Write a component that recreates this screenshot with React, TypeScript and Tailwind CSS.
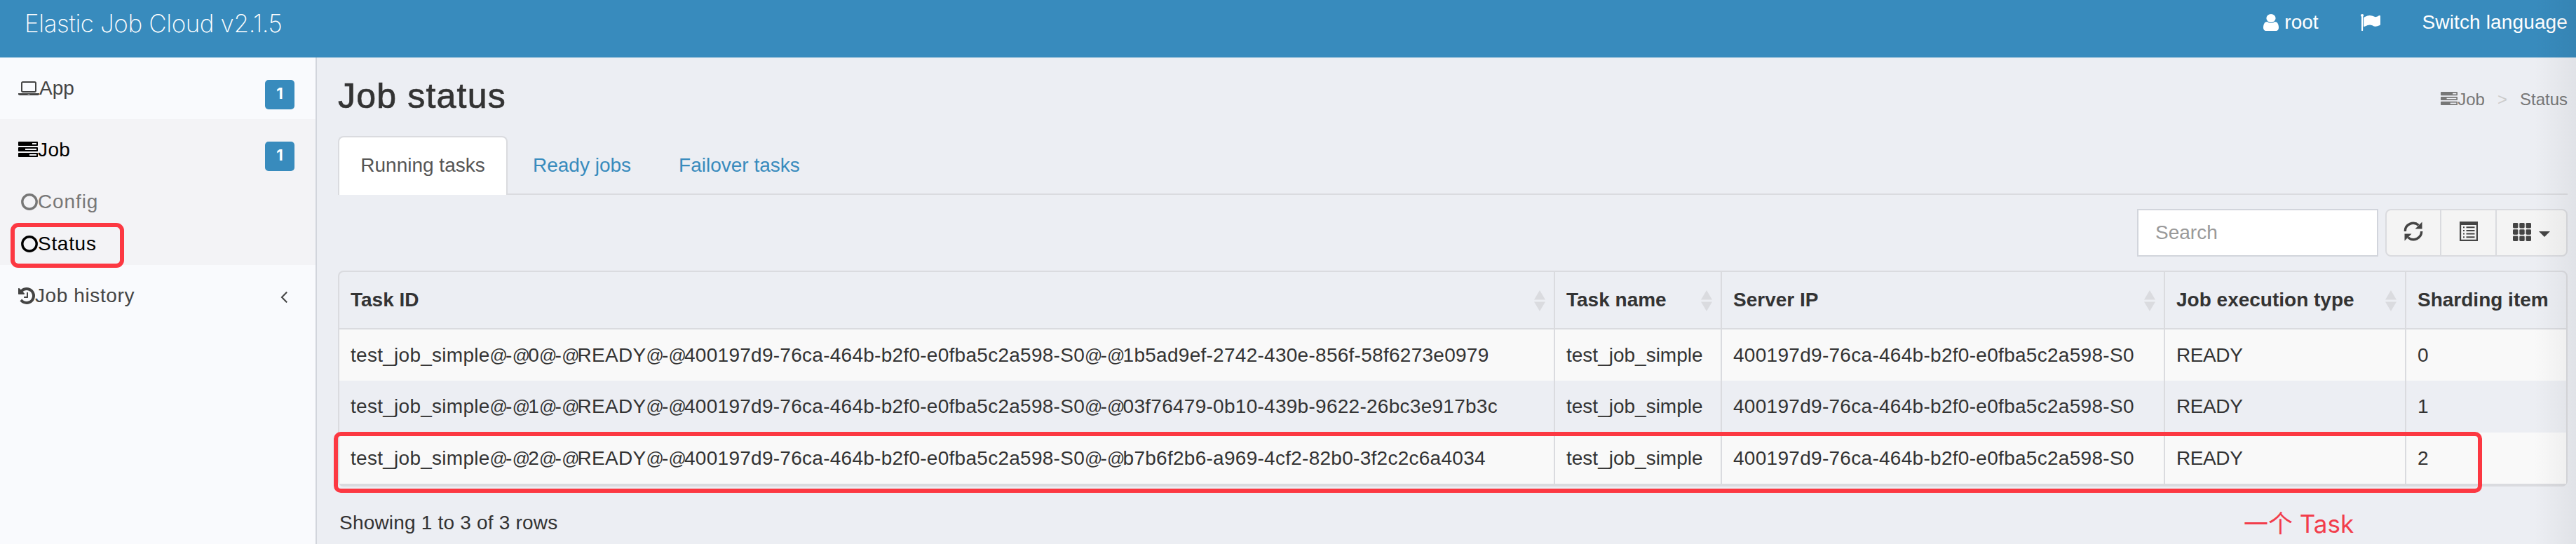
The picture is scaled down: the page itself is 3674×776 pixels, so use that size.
import type { ReactNode } from "react";

const TASKS =
  "M1024 1408h640v-128h-640v128zm-384-512h1024v-128h-1024v128zm640-512h384v-128h-384v128zm512 832v256q0 26-19 45t-45 19h-1664q-26 0-45-19t-19-45v-256q0-26 19-45t45-19h1664q26 0 45 19t19 45zm0-512v256q0 26-19 45t-45 19h-1664q-26 0-45-19t-19-45v-256q0-26 19-45t45-19h1664q26 0 45 19t19 45zm0-512v256q0 26-19 45t-45 19h-1664q-26 0-45-19t-19-45v-256q0-26 19-45t45-19h1664q26 0 45 19t19 45z";
const LAPTOP =
  "M416 1280q-66 0-113-47t-47-113v-704q0-66 47-113t113-47h1088q66 0 113 47t47 113v704q0 66-47 113t-113 47h-1088zm-32-864v704q0 13 9.5 22.5t22.5 9.5h1088q13 0 22.5-9.5t9.5-22.5v-704q0-13-9.5-22.5t-22.5-9.5h-1088q-13 0-22.5 9.5t-9.5 22.5zm1376 928h160v96q0 40-47 68t-113 28h-1600q-66 0-113-28t-47-68v-96h1760zm-720 96q16 0 16-16t-16-16h-160q-16 0-16 16t16 16h160z";
const HISTORY =
  "M1664 896q0 156-61 298t-164 245-245 164-298 61q-172 0-327-72.5t-264-204.5q-7-10-6.5-22.5t8.5-20.5l137-138q10-9 25-9 16 2 23 12 73 95 179 147t225 52q104 0 198.5-40.5t163.5-109.5 109.5-163.5 40.5-198.5-40.5-198.5-109.5-163.5-163.5-109.5-198.5-40.5q-98 0-188 35.5t-160 101.5l137 138q31 30 14 69-17 40-59 40h-448q-26 0-45-19t-19-45v-448q0-42 40-59 39-17 69 14l130 129q107-101 244.5-156.5t284.5-55.5q156 0 298 61t245 164 164 245 61 298zm-640-288v448q0 14-9 23t-23 9h-320q-14 0-23-9t-9-23v-64q0-14 9-23t23-9h224v-352q0-14 9-23t23-9h64q14 0 23 9t9 23z";
const USER =
  "M1536 1399q0 109-62.5 187t-150.5 78h-854q-88 0-150.5-78t-62.5-187q0-85 8.5-160.5t31.5-152 58.5-131 94-89 134.5-34.5q131 128 313 128t313-128q76 0 134.5 34.5t94 89 58.5 131 31.5 152 8.5 160.5zm-256-887q0 159-112.5 271.5t-271.5 112.5-271.5-112.5-112.5-271.5 112.5-271.5 271.5-112.5 271.5 112.5 112.5 271.5z";
const FLAG =
  "M320 256q0 72-64 110v1266q0 13-9.5 22.5t-22.5 9.5h-64q-13 0-22.5-9.5t-9.5-22.5v-1266q-64-38-64-110 0-53 37.5-90.5t90.5-37.5 90.5 37.5 37.5 90.5zm1472 64v763q0 25-12.5 38.5t-39.5 27.5q-215 116-369 116-61 0-123.5-22t-108.5-48-115.5-48-142.5-22q-192 0-464 146-17 9-33 9-26 0-45-19t-19-45v-742q0-32 31-55 21-14 79-43 236-120 421-120 107 0 200 29t219 88q38 19 88 19 54 0 117.5-21t110-47 88-47 54.5-21q26 0 45 19t19 45z";
const ANGLE =
  "M1203 544q0 13-10 23l-393 393 393 393q10 10 10 23t-10 23l-50 50q-10 10-23 10t-23-10l-466-466q-10-10-10-23t10-23l466-466q10-10 23-10t23 10l50 50q10 10 10 23z";

function Icon({ d, box, className }: { d: string; box: string; className: string }) {
  return (
    <svg viewBox={box} className={`shrink-0 fill-current ${className}`} preserveAspectRatio="none">
      <path d={d} />
    </svg>
  );
}

function Ring() {
  return (
    <svg viewBox="0 0 24 24" className="h-6 w-6 shrink-0">
      <circle cx="12" cy="12" r="10.2" fill="none" stroke="currentColor" strokeWidth="3.4" />
    </svg>
  );
}

function Badge() {
  return (
    <span className="mt-2 flex h-[42px] w-[42px] items-center justify-center rounded-[5px] bg-[#388bbd] pb-1 font-['Inter','Liberation_Sans',sans-serif] text-[22px] font-bold text-white">
      1
    </span>
  );
}

function SortArrows() {
  return (
    <svg viewBox="0 0 16 30" className="mt-0.5 h-[30px] w-4 shrink-0 fill-[#dadbdf]">
      <path d="M8 0L16 13.500H0zM8 30L16 16.500H0z" />
    </svg>
  );
}

function Th({ children, className, sort = true }: { children: ReactNode; className: string; sort?: boolean }) {
  return (
    <div className={`flex items-center justify-between border-[#dadbdf] pl-4 ${className}`}>
      <span>{children}</span>
      {sort && <SortArrows />}
    </div>
  );
}

function TaskId({ value }: { value: string }) {
  return (
    <span className="tracking-[0.27px]">
      {value.split(/(@)/).map((part, i) =>
        part === "@" ? (
          <span key={i} className="text-[25px] tracking-[-2.9px]">@</span>
        ) : (
          part
        ),
      )}
    </span>
  );
}

const SERVER = "400197d9-76ca-464b-b2f0-e0fba5c2a598-S0";
const ROWS = [
  "1b5ad9ef-2742-430e-856f-58f6273e0979",
  "03f76479-0b10-439b-9622-26bc3e917b3c",
  "b7b6f2b6-a969-4cf2-82b0-3f2c2c6a4034",
];

export default function App() {
  return (
    <div className="relative flex h-[776px] w-[3674px] flex-col overflow-hidden bg-[#eceef3] font-['Liberation_Sans',sans-serif] text-[28px] leading-10 text-[#333]">
      <header className="flex h-[82px] shrink-0 justify-between bg-[#388bbd] text-white">
        <div className="pt-[13px] pl-[35px] font-['Inter','Liberation_Sans',sans-serif] text-[35px] font-extralight tracking-[-0.4px]">
          Elastic Job Cloud v2.1.5
        </div>
        <div className="flex pt-3 pr-3">
          <div className="flex">
            <Icon d={USER} box="256 128 1280 1536" className="mt-2 h-6 w-[22px]" />
            <span className="ml-2">root</span>
          </div>
          <Icon d={FLAG} box="64 128 1728 1536" className="mt-2 ml-[60px] h-6 w-7" />
          <span className="ml-[60px] tracking-[0.13px]">Switch language</span>
        </div>
      </header>

      <div className="flex flex-1">
        <aside className="flex w-[452px] shrink-0 flex-col border-r-2 border-[#d2d5dc] bg-[#f9fafd] text-[#444]">
          <div className="flex h-[88px] justify-between pt-6 pr-[30px] pl-[26px]">
            <div className="flex">
              <Icon d={LAPTOP} box="0 256 1920 1280" className="mt-2.5 h-5 w-[30px]" />
              <span>App</span>
            </div>
            <Badge />
          </div>
          <div className="h-[208px] bg-[#f3f3f6] text-black">
            <div className="flex h-[88px] justify-between pt-6 pr-[30px] pl-[26px]">
              <div className="flex">
                <Icon d={TASKS} box="0 128 1792 1408" className="mt-2 h-[22px] w-7" />
                <span className="tracking-[0.4px]">Job</span>
              </div>
              <Badge />
            </div>
            <div className="flex h-[60px] items-center pl-[30px] text-[#777]">
              <Ring />
              <span className="tracking-[0.9px]">Config</span>
            </div>
            <div className="flex h-[60px] items-center pl-[30px]">
              <Ring />
              <span className="tracking-[0.7px]">Status</span>
            </div>
          </div>
          <div className="flex h-[88px] justify-between pt-6 pr-10 pl-[26px]">
            <div className="flex">
              <Icon d={HISTORY} box="128 128 1536 1536" className="mt-2 h-6 w-6" />
              <span className="tracking-[0.6px]">Job history</span>
            </div>
            <Icon d={ANGLE} box="581 460 640 1000" className="mt-3.5 h-4 w-2.5" />
          </div>
        </aside>

        <main className="flex flex-1 flex-col pr-3 pl-[30px]">
          <div className="flex h-[112px] justify-between">
            <h1 className="pt-[31px] text-[50px] leading-[48px] font-medium tracking-[1.2px] [-webkit-text-stroke:0.7px_#333]">Job status</h1>
            <div className="flex pt-10 text-[24px] text-[#777]">
              <Icon d={TASKS} box="0 128 1792 1408" className="mt-[9px] h-[19px] w-6" />
              <span>Job</span>
              <span className="mx-[18px] text-[#ccc]">&gt;</span>
              <span>Status</span>
            </div>
          </div>

          <div className="flex h-[84px] shrink-0 border-b-2 border-[#dadbdf]">
            <div className="-mb-0.5 flex w-[242px] items-center justify-center rounded-t-lg border-2 border-b-0 border-[#dadbdf] bg-white pb-0.5 text-[#555]">
              Running tasks
            </div>
            <div className="flex items-center pt-0.5 pl-9 text-[#388bbd]">Ready jobs</div>
            <div className="flex items-center pt-0.5 pl-[68px] text-[#388bbd]">Failover tasks</div>
          </div>

          <div className="mt-5 flex h-[68px] shrink-0 justify-end">
            <div className="flex w-[344px] items-center border-2 border-[#d2d5dc] bg-white pl-6 text-[#999]">Search</div>
            <div className="ml-2.5 flex w-[260px] rounded-lg border-2 border-[#dadbdf] bg-[#f4f4f4] text-[#444]">
              <div className="flex w-[76px] items-center justify-center pb-1">
                <svg viewBox="0 0 28 28" className="h-7 w-7">
                  <path d="M2.300 14A11.600 11.600 0 0 1 21.500 5.200M25.700 14A11.600 11.600 0 0 1 6.500 22.800" fill="none" stroke="currentColor" strokeWidth="3.400" />
                  <path d="M26.500 0.500V10.500H16.500zM1.500 27.500V17.500H11.500z" fill="currentColor" />
                </svg>
              </div>
              <div className="flex w-[79px] items-center justify-center border-l-2 border-[#dadbdf] pb-1">
                <svg viewBox="0 0 26 28" className="h-7 w-[26px]">
                  <path fillRule="evenodd" d="M0 0H26V28H0zM2.200 5V25.800H23.800V5z" fill="currentColor" />
                  <path d="M5 7.200h2v2H5zM9.500 7.200h12v2h-12zM5 12h2v2H5zM9.500 12h12v2h-12zM5 16.600h2v2H5zM9.500 16.600h12v2h-12zM5 21.300h2v2H5zM9.500 21.300h12v2h-12z" fill="currentColor" />
                </svg>
              </div>
              <div className="flex flex-1 items-center gap-[11px] border-l-2 border-[#dadbdf] pb-0.5 pl-[23px]">
                <svg viewBox="0 0 26 26" className="h-[26px] w-[26px] fill-current">
                  {[0, 9.3, 18.6].map((y) => [0, 9.3, 18.6].map((x) => <rect key={`${x}-${y}`} x={x} y={y} width="7.400" height="7.400" rx="1.400" />))}
                </svg>
                <svg viewBox="0 0 16 8" className="mt-1.5 h-2 w-4 fill-current">
                  <path d="M0 0H16L8 8z" />
                </svg>
              </div>
            </div>
          </div>

          <div className="mt-5 flex h-[308px] shrink-0 flex-col rounded-lg border-2 border-b-4 border-[#dadbdf]">
            <div className="flex h-[82px] shrink-0 border-b-2 border-[#dadbdf] font-bold">
              <Th className="w-[1732px] pr-3">Task ID</Th>
              <Th className="w-[238px] border-l-2 pr-3">Task name</Th>
              <Th className="w-[632px] border-l-2 pr-3">Server IP</Th>
              <Th className="w-[344px] border-l-2 pr-3">Job execution type</Th>
              <Th className="flex-1 border-l-2" sort={false}>Sharding item</Th>
            </div>
            {ROWS.map((id, i) => (
              <div key={id} className={`flex flex-1 items-stretch ${i % 2 ? "" : "bg-[#f9f9f9]"}`}>
                <div className="flex w-[1732px] items-center pt-px pl-4">
                  <TaskId value={`test_job_simple@-@${i}@-@READY@-@${SERVER}@-@${id}`} />
                </div>
                <div className="flex w-[238px] items-center border-l-2 border-[#dadbdf] pt-px pl-4">test_job_simple</div>
                <div className="flex w-[632px] items-center border-l-2 border-[#dadbdf] pt-px pl-4 tracking-[0.29px]">{SERVER}</div>
                <div className="flex w-[344px] items-center border-l-2 border-[#dadbdf] pt-px pl-4 tracking-[-0.4px]">READY</div>
                <div className="flex flex-1 items-center border-l-2 border-[#dadbdf] pt-px pl-4">{i}</div>
              </div>
            ))}
          </div>
          <div className="mt-8 pl-0.5 tracking-[0.2px]">Showing 1 to 3 of 3 rows</div>
        </main>
      </div>

      <div className="absolute top-[318px] left-[15px] h-[64px] w-[162px] rounded-[11px] border-[6px] border-[#fc3842]" />
      <div className="absolute top-[616px] left-[476px] h-[87px] w-[3064px] rounded-[10px] border-[6px] border-[#fc3842]" />
      <div className="absolute top-[722px] left-[3200px] font-['Inter','Noto_Sans_CJK_SC',sans-serif] text-[35px] leading-[50px] text-[#f23d4b]">
        一个 Task
      </div>
      <div className="absolute inset-y-0 right-0 w-[60px] bg-linear-to-r from-transparent to-black/5" />
    </div>
  );
}
